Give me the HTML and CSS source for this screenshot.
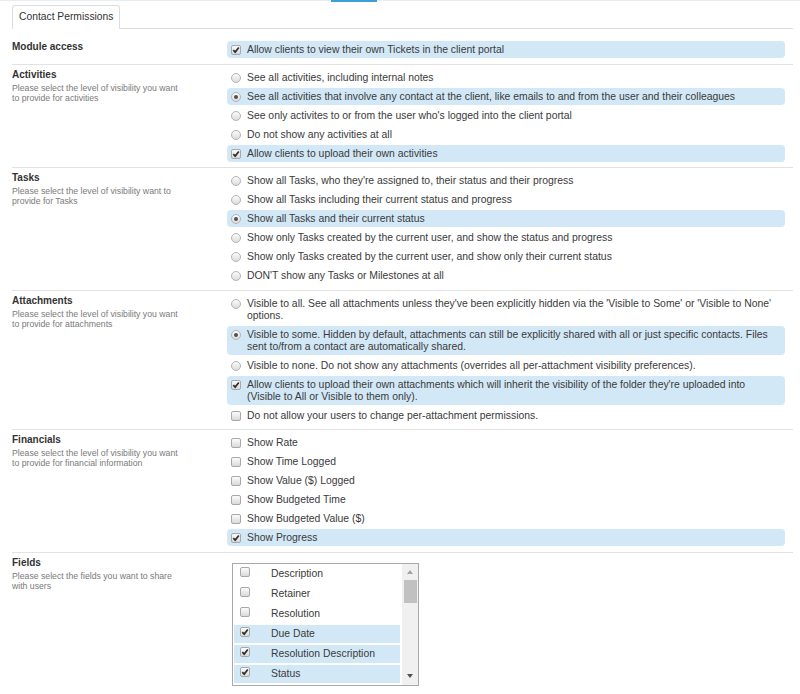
FILE: index.html
```html
<!DOCTYPE html>
<html>
<head>
<meta charset="utf-8">
<link rel="stylesheet" href="styles.css">
</head>
<body>
<div class="topbar"><div class="accent"></div></div>
<div class="page">
  <div class="tabs"><div class="tab">Contact Permissions</div></div>
  <div class="content">

    <section class="sec">
      <div class="label"><h3>Module access</h3></div>
      <div class="opts">
        <div class="opt on"><span class="ctl cb"><svg viewBox="0 0 8 8" width="8" height="8"><path d="M1.3 4.1 L3.2 6.1 L6.8 1.5" /></svg></span><span class="txt">Allow clients to view their own Tickets in the client portal</span></div>
      </div>
    </section>

    <section class="sec">
      <div class="label"><h3>Activities</h3><p>Please select the level of visibility you want<br>to provide for activities</p></div>
      <div class="opts">
        <div class="opt"><span class="ctl rb"></span><span class="txt">See all activities, including internal notes</span></div>
        <div class="opt on"><span class="ctl rb checked"></span><span class="txt">See all activities that involve any contact at the client, like emails to and from the user and their colleagues</span></div>
        <div class="opt"><span class="ctl rb"></span><span class="txt">See only activites to or from the user who's logged into the client portal</span></div>
        <div class="opt"><span class="ctl rb"></span><span class="txt">Do not show any activities at all</span></div>
        <div class="opt on"><span class="ctl cb"><svg viewBox="0 0 8 8" width="8" height="8"><path d="M1.3 4.1 L3.2 6.1 L6.8 1.5" /></svg></span><span class="txt">Allow clients to upload their own activities</span></div>
      </div>
    </section>

    <section class="sec">
      <div class="label"><h3>Tasks</h3><p>Please select the level of visibility want to<br>provide for Tasks</p></div>
      <div class="opts">
        <div class="opt"><span class="ctl rb"></span><span class="txt">Show all Tasks, who they're assigned to, their status and their progress</span></div>
        <div class="opt"><span class="ctl rb"></span><span class="txt">Show all Tasks including their current status and progress</span></div>
        <div class="opt on"><span class="ctl rb checked"></span><span class="txt">Show all Tasks and their current status</span></div>
        <div class="opt"><span class="ctl rb"></span><span class="txt">Show only Tasks created by the current user, and show the status and progress</span></div>
        <div class="opt"><span class="ctl rb"></span><span class="txt">Show only Tasks created by the current user, and show only their current status</span></div>
        <div class="opt"><span class="ctl rb"></span><span class="txt">DON'T show any Tasks or Milestones at all</span></div>
      </div>
    </section>

    <section class="sec">
      <div class="label"><h3>Attachments</h3><p>Please select the level of visibility you want<br>to provide for attachments</p></div>
      <div class="opts">
        <div class="opt"><span class="ctl rb"></span><span class="txt">Visible to all. See all attachments unless they've been explicitly hidden via the 'Visible to Some' or 'Visible to None'<br>options.</span></div>
        <div class="opt on"><span class="ctl rb checked"></span><span class="txt">Visible to some. Hidden by default, attachments can still be explicitly shared with all or just specific contacts. Files<br>sent to/from a contact are automatically shared.</span></div>
        <div class="opt"><span class="ctl rb"></span><span class="txt">Visible to none. Do not show any attachments (overrides all per-attachment visibility preferences).</span></div>
        <div class="opt on"><span class="ctl cb"><svg viewBox="0 0 8 8" width="8" height="8"><path d="M1.3 4.1 L3.2 6.1 L6.8 1.5" /></svg></span><span class="txt">Allow clients to upload their own attachments which will inherit the visibility of the folder they're uploaded into<br>(Visible to All or Visible to them only).</span></div>
        <div class="opt"><span class="ctl cb"></span><span class="txt">Do not allow your users to change per-attachment permissions.</span></div>
      </div>
    </section>

    <section class="sec">
      <div class="label"><h3>Financials</h3><p>Please select the level of visibility you want<br>to provide for financial information</p></div>
      <div class="opts">
        <div class="opt"><span class="ctl cb"></span><span class="txt">Show Rate</span></div>
        <div class="opt"><span class="ctl cb"></span><span class="txt">Show Time Logged</span></div>
        <div class="opt"><span class="ctl cb"></span><span class="txt">Show Value ($) Logged</span></div>
        <div class="opt"><span class="ctl cb"></span><span class="txt">Show Budgeted Time</span></div>
        <div class="opt"><span class="ctl cb"></span><span class="txt">Show Budgeted Value ($)</span></div>
        <div class="opt on"><span class="ctl cb"><svg viewBox="0 0 8 8" width="8" height="8"><path d="M1.3 4.1 L3.2 6.1 L6.8 1.5" /></svg></span><span class="txt">Show Progress</span></div>
      </div>
    </section>

    <section class="sec">
      <div class="label"><h3>Fields</h3><p>Please select the fields you want to share<br>with users</p></div>
      <div class="opts">
        <div class="listbox">
          <div class="lrows">
            <div class="lrow"><span class="ctl cb"></span><span>Description</span></div>
            <div class="lrow"><span class="ctl cb"></span><span>Retainer</span></div>
            <div class="lrow"><span class="ctl cb"></span><span>Resolution</span></div>
            <div class="lrow on"><span class="ctl cb"><svg viewBox="0 0 8 8" width="8" height="8"><path d="M1.3 4.1 L3.2 6.1 L6.8 1.5" /></svg></span><span>Due Date</span></div>
            <div class="lrow on"><span class="ctl cb"><svg viewBox="0 0 8 8" width="8" height="8"><path d="M1.3 4.1 L3.2 6.1 L6.8 1.5" /></svg></span><span>Resolution Description</span></div>
            <div class="lrow on"><span class="ctl cb"><svg viewBox="0 0 8 8" width="8" height="8"><path d="M1.3 4.1 L3.2 6.1 L6.8 1.5" /></svg></span><span>Status</span></div>
            <div class="lrow on"></div>
          </div>
          <div class="sbar">
            <span class="arrow-up"></span>
            <span class="thumb"></span>
            <span class="arrow-down"></span>
          </div>
        </div>
      </div>
    </section>

  </div>
</div>
</body>
</html>
```

FILE: styles.css
```css
* { box-sizing: border-box; }

body {
  margin: 0;
  font-family: "Liberation Sans", Arial, sans-serif;
  color: #333;
  background: #fff;
}

.topbar {
  height: 2px;
  background: linear-gradient(#e6eef4 50%, #fff 50%);
  display: flex;
}

.accent {
  margin-left: 331px;
  width: 46px;
  height: 2px;
  background: #3d9fd8;
}

.page {
  margin-left: 12px;
  width: 781px;
}

.tabs {
  margin-top: 3px;
  height: 24px;
  border-bottom: 1px solid #dcdcdc;
  display: flex;
  align-items: flex-start;
}

.tab {
  height: 24px;
  width: 108px;
  padding: 0 0 0 6px;
  white-space: nowrap;
  line-height: 22px;
  font-size: 10.3px;
  color: #333;
  background: #fff;
  border: 1px solid #dcdcdc;
  border-bottom: none;
  border-radius: 3px 3px 0 0;
}

.content {
  padding-top: 8px;
}

.sec {
  display: flex;
  padding: 4px 8px 5.5px 0;
  border-top: 1px solid #e2e2e2;
}

.sec:first-child {
  border-top: none;
}

.label {
  width: 215px;
  flex: none;
}

.label h3 {
  margin: 0;
  font-size: 10px;
  line-height: 12px;
  font-weight: bold;
  color: #333;
}

.label p {
  margin: 2px 0 0;
  font-size: 8.7px;
  line-height: 10px;
  color: #7a7a7a;
}

.opts {
  flex: 1;
  display: flex;
  flex-direction: column;
  gap: 2px;
}

.opt {
  display: flex;
  align-items: flex-start;
  padding: 3px 4px 2px 4px;
  line-height: 12px;
  font-size: 10.4px;
  border-radius: 4px;
  color: #3a3a3a;
}

.opt.on {
  background: #d3e8f6;
}

.txt {
  white-space: nowrap;
}

.ctl {
  flex: none;
  width: 10px;
  height: 10px;
  margin: 1px 6px 0 0;
  display: flex;
  align-items: center;
  justify-content: center;
}

.rb {
  border-radius: 50%;
  border: 1px solid #b3b3b3;
  background: linear-gradient(#fbfbfb, #dcdcdc);
}

.rb.checked::after {
  content: "";
  width: 4px;
  height: 4px;
  border-radius: 50%;
  background: #505050;
}

.cb {
  border: 1px solid #a8a8a8;
  border-radius: 2px;
  background: linear-gradient(#fcfcfc, #d9d9d9);
}

.cb svg path {
  fill: none;
  stroke: #2e2e2e;
  stroke-width: 1.7;
}

.listbox {
  margin: 6px 0 0 5px;
  width: 187px;
  height: 123px;
  border: 1px solid #a9a9a9;
  padding-left: 1px;
  display: flex;
  overflow: hidden;
}

.lrows {
  width: 166px;
  padding-top: 1px;
  display: flex;
  flex-direction: column;
  gap: 2px;
  overflow: hidden;
}

.lrow {
  flex: none;
  height: 18px;
  display: flex;
  align-items: center;
  padding-left: 6px;
  font-size: 10.4px;
  color: #3a3a3a;
}

.lrow .ctl {
  margin: -3px 21px 0 0;
}

.lrow.on {
  background: #d3e8f6;
}

.sbar {
  margin-left: 2px;
  width: 16px;
  background: #f0f0f0;
  display: flex;
  flex-direction: column;
  align-items: center;
}

.arrow-up {
  margin-top: 6px;
  width: 0;
  height: 0;
  border-left: 3.5px solid transparent;
  border-right: 3.5px solid transparent;
  border-bottom: 4px solid #a3a3a3;
}

.thumb {
  margin-top: 6px;
  width: 13px;
  height: 23px;
  background: #c1c1c1;
}

.arrow-down {
  margin-top: auto;
  margin-bottom: 7px;
  width: 0;
  height: 0;
  border-left: 3.5px solid transparent;
  border-right: 3.5px solid transparent;
  border-top: 4px solid #505050;
}
```
